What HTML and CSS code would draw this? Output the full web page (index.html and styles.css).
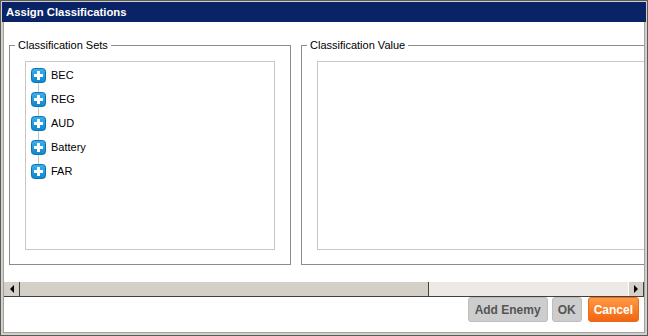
FILE: index.html
```html
<!DOCTYPE html>
<html>
<head>
<meta charset="utf-8">
<link rel="stylesheet" href="styles.css">
</head>
<body>
<div class="dialog">
  <div class="titlebar">Assign Classifications</div>
  <div class="panel">
    <div class="scroll-area">
      <div class="scroll-content">
        <div class="group group-sets">
          <span class="legend">Classification Sets</span>
          <div class="listbox">
            <ul class="tree">
              <li class="node"><svg class="expander" width="15" height="15" viewBox="0 0 15 15"><defs><linearGradient id="g" x1="0" y1="0" x2="0" y2="1"><stop offset="0" stop-color="#3fb0ee"/><stop offset="1" stop-color="#0f86cc"/></linearGradient></defs><rect x="0.5" y="0.5" width="14" height="14" rx="3" fill="url(#g)" stroke="#0b74b6"/><rect x="6" y="3" width="3" height="9" fill="#fff"/><rect x="3" y="6" width="9" height="3" fill="#fff"/></svg><span class="label">BEC</span></li>
              <li class="node"><svg class="expander" width="15" height="15" viewBox="0 0 15 15"><rect x="0.5" y="0.5" width="14" height="14" rx="3" fill="url(#g)" stroke="#0b74b6"/><rect x="6" y="3" width="3" height="9" fill="#fff"/><rect x="3" y="6" width="9" height="3" fill="#fff"/></svg><span class="label">REG</span></li>
              <li class="node"><svg class="expander" width="15" height="15" viewBox="0 0 15 15"><rect x="0.5" y="0.5" width="14" height="14" rx="3" fill="url(#g)" stroke="#0b74b6"/><rect x="6" y="3" width="3" height="9" fill="#fff"/><rect x="3" y="6" width="9" height="3" fill="#fff"/></svg><span class="label">AUD</span></li>
              <li class="node"><svg class="expander" width="15" height="15" viewBox="0 0 15 15"><rect x="0.5" y="0.5" width="14" height="14" rx="3" fill="url(#g)" stroke="#0b74b6"/><rect x="6" y="3" width="3" height="9" fill="#fff"/><rect x="3" y="6" width="9" height="3" fill="#fff"/></svg><span class="label">Battery</span></li>
              <li class="node"><svg class="expander" width="15" height="15" viewBox="0 0 15 15"><rect x="0.5" y="0.5" width="14" height="14" rx="3" fill="url(#g)" stroke="#0b74b6"/><rect x="6" y="3" width="3" height="9" fill="#fff"/><rect x="3" y="6" width="9" height="3" fill="#fff"/></svg><span class="label">FAR</span></li>
            </ul>
          </div>
        </div>
        <div class="group group-values">
          <span class="legend">Classification Value</span>
          <div class="listbox"></div>
        </div>
      </div>
    </div>
    <div class="hscroll">
      <div class="arrow arrow-left"></div>
      <div class="track"><div class="thumb" style="width:409px"></div></div>
      <div class="arrow arrow-right"></div>
    </div>
    <div class="actions">
      <button class="btn btn-add">Add Enemy</button>
      <button class="btn">OK</button>
      <button class="btn btn-cancel">Cancel</button>
    </div>
  </div>
</div>
</body>
</html>
```
FILE: styles.css
```css
* { box-sizing: border-box; }
html, body { margin: 0; padding: 0; }
body {
  background: #fff;
  font-family: "Liberation Sans", Arial, sans-serif;
  font-size: 11px;
  color: #000;
}
.dialog {
  width: 648px;
  height: 336px;
  border: 1px solid #5a5a5a;
  background: #d4d0c8;
  padding: 1px 1px 2px;
  display: flex;
  flex-direction: column;
}
.titlebar {
  height: 20px;
  flex: none;
  background: #0a2366;
  color: #fff;
  font-weight: bold;
  font-size: 11.3px;
  line-height: 20px;
  padding-left: 4px;
}
.panel {
  flex: 1;
  margin: 0 1px;
  border: 1px solid #a0a0a0;
  border-top: 0;
  background: #fff;
  display: flex;
  flex-direction: column;
  min-height: 0;
}
.scroll-area {
  height: 260px;
  flex: none;
  overflow: hidden;
}
.scroll-content {
  display: flex;
  gap: 10px;
  padding: 23px 0 0 5px;
  width: max-content;
}
.group {
  position: relative;
  border: 1px solid #8c8c8c;
  height: 220px;
  padding: 15px 15px 14px;
  display: flex;
}
.group-sets { width: 282px; }
.group-values { width: 420px; }
.legend {
  position: absolute;
  top: -7px;
  left: 5px;
  padding: 0 3px;
  background: #fff;
  line-height: 13px;
}
.listbox {
  flex: 1;
  border: 1px solid #c8c8c8;
}
.tree {
  list-style: none;
  margin: 0;
  padding: 6px 0 0 5px;
}
.node {
  position: relative;
  height: 24px;
  display: flex;
  align-items: flex-start;
  gap: 5px;
}
.node:not(:last-child)::after {
  content: "";
  position: absolute;
  left: 7px;
  top: 15px;
  height: 9px;
  border-left: 1px solid #c4c4c4;
}
.expander { display: block; flex: none; }
.label { line-height: 15px; }
.hscroll {
  height: 15px;
  flex: none;
  display: flex;
  border-bottom: 1px solid #404040;
  background: #ece9e6;
}
.arrow {
  width: 16px;
  flex: none;
  background: #d4d0c8;
  display: flex;
  align-items: center;
  justify-content: center;
}
.arrow-left { border-right: 1px solid #404040; }
.arrow-right { border-left: 1px solid #fff; border-right: 1px solid #404040; }
.arrow-left::before {
  content: "";
  border-top: 4px solid transparent;
  border-bottom: 4px solid transparent;
  border-right: 4px solid #000;
}
.arrow-right::before {
  content: "";
  border-top: 4px solid transparent;
  border-bottom: 4px solid transparent;
  border-left: 4px solid #000;
}
.track { flex: 1; display: flex; }
.thumb {
  background: #d4d0c8;
  border-right: 1px solid #404040;
}
.actions {
  display: flex;
  justify-content: flex-end;
  gap: 4px;
  padding: 0 5px 0 0;
}
.btn {
  height: 25px;
  padding: 0 5px;
  border: 1px solid #bdbdbd;
  border-radius: 3px;
  background: #cdcdcd;
  color: #555;
  font: bold 12px "Liberation Sans", Arial, sans-serif;
}
.btn-add { padding: 0 6px; }
.btn-cancel {
  margin-left: 2px;
  background: linear-gradient(#ff9a45, #f26510);
  border-color: #e86b1f;
  color: #fff;
}
```
